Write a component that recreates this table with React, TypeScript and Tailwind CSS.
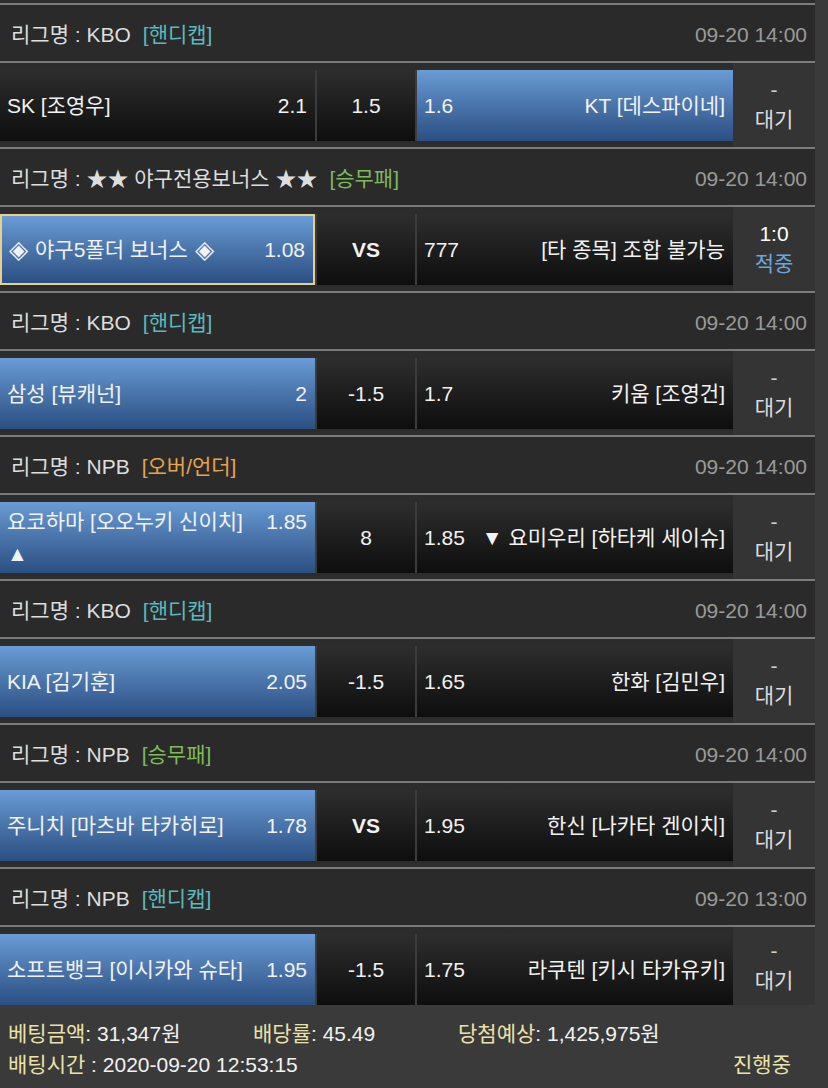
import type { ReactNode } from 'react';

const BLUE = 'bg-linear-to-b from-[#6a9cd5] to-[#2b4f82]';
const DARK = 'bg-linear-to-b from-[#2e2e2e] to-[#0e0e0e]';

type Match = {
  id: number;
  league: string;
  kind: string;
  kindColor: string;
  date: string;
  home: ReactNode;
  homeSub?: string;
  homeOdds: string;
  mid: string;
  midBold?: boolean;
  awayOdds: string;
  away: string;
  pick: 'home' | 'away';
  bonus?: boolean;
  score: string;
  result: string;
  resultColor: string;
};

const Diamond = () => <span className="text-[25px] leading-none">◈</span>;

const MATCHES: Match[] = [
  { id: 1, league: 'KBO', kind: '[핸디캡]', kindColor: 'text-[#5cb8bd]', date: '09-20 14:00', home: 'SK [조영우]', homeOdds: '2.1', mid: '1.5', awayOdds: '1.6', away: 'KT [데스파이네]', pick: 'away', score: '-', result: '대기', resultColor: 'text-[#dcdcdc]' },
  {
    id: 2, league: '★★ 야구전용보너스 ★★', kind: '[승무패]', kindColor: 'text-[#7cba5a]', date: '09-20 14:00',
    home: (
      <>
        <Diamond />
        <span className="mx-[7px]">야구5폴더 보너스</span>
        <Diamond />
      </>
    ),
    homeOdds: '1.08', mid: 'VS', midBold: true, awayOdds: '777', away: '[타 종목] 조합 불가능', pick: 'home', bonus: true, score: '1:0', result: '적중', resultColor: 'text-[#6ea6dc]',
  },
  { id: 3, league: 'KBO', kind: '[핸디캡]', kindColor: 'text-[#5cb8bd]', date: '09-20 14:00', home: '삼성 [뷰캐넌]', homeOdds: '2', mid: '-1.5', awayOdds: '1.7', away: '키움 [조영건]', pick: 'home', score: '-', result: '대기', resultColor: 'text-[#dcdcdc]' },
  { id: 4, league: 'NPB', kind: '[오버/언더]', kindColor: 'text-[#e9a24c]', date: '09-20 14:00', home: '요코하마 [오오누키 신이치]', homeSub: '▲', homeOdds: '1.85', mid: '8', awayOdds: '1.85', away: '▼ 요미우리 [하타케 세이슈]', pick: 'home', score: '-', result: '대기', resultColor: 'text-[#dcdcdc]' },
  { id: 5, league: 'KBO', kind: '[핸디캡]', kindColor: 'text-[#5cb8bd]', date: '09-20 14:00', home: 'KIA [김기훈]', homeOdds: '2.05', mid: '-1.5', awayOdds: '1.65', away: '한화 [김민우]', pick: 'home', score: '-', result: '대기', resultColor: 'text-[#dcdcdc]' },
  { id: 6, league: 'NPB', kind: '[승무패]', kindColor: 'text-[#7cba5a]', date: '09-20 14:00', home: '주니치 [마츠바 타카히로]', homeOdds: '1.78', mid: 'VS', midBold: true, awayOdds: '1.95', away: '한신 [나카타 겐이치]', pick: 'home', score: '-', result: '대기', resultColor: 'text-[#dcdcdc]' },
  { id: 7, league: 'NPB', kind: '[핸디캡]', kindColor: 'text-[#5cb8bd]', date: '09-20 13:00', home: '소프트뱅크 [이시카와 슈타]', homeOdds: '1.95', mid: '-1.5', awayOdds: '1.75', away: '라쿠텐 [키시 타카유키]', pick: 'home', score: '-', result: '대기', resultColor: 'text-[#dcdcdc]' },
];

const Line = () => <div className="h-[2px] bg-[#7b7b7b]" />;

const MatchBlock = ({ m, last }: { m: Match; last: boolean }) => {
  return (
    <div>
      <Line />
      <div className="flex h-[56px] items-center justify-between bg-[#2a2a2a] pl-[11px] pr-[8px] pt-[4px]">
        <div className="text-[#dedede]">
          리그명 : {m.league}
          <span className={`ml-[12px] ${m.kindColor}`}>{m.kind}</span>
        </div>
        <div className="text-[#9a9a9a]">{m.date}</div>
      </div>
      <Line />
      <div className={`flex ${last ? 'h-[78px]' : 'h-[84px]'}`}>
        <div className={`flex flex-1 bg-[#2c2c2c] pt-[7px] ${last ? 'pb-0' : 'pb-[6px]'}`}>
          <div className="flex w-full gap-[2px] bg-[#3c3c3c]">
            <div
              className={`flex w-[315px] items-center justify-between pl-[7px] pr-[8px] ${
                m.pick === 'home' ? BLUE : DARK
              } ${m.bonus ? 'border-2 border-[#e7d08f] pl-[5px] pr-[6px]' : ''}`}
            >
              {m.homeSub ? (
                <>
                  <div className="self-center leading-[32px]">
                    <div>{m.home}</div>
                    <div>{m.homeSub}</div>
                  </div>
                  <div className="self-center pb-[32px] leading-[32px]">{m.homeOdds}</div>
                </>
              ) : (
                <>
                  <div className="flex items-center">{m.home}</div>
                  <div>{m.homeOdds}</div>
                </>
              )}
            </div>
            <div className={`flex w-[98px] items-center justify-center ${DARK} ${m.midBold ? 'font-bold' : ''}`}>
              {m.mid}
            </div>
            <div
              className={`flex flex-1 items-center justify-between pl-[7px] pr-[8px] ${
                m.pick === 'away' ? BLUE : DARK
              }`}
            >
              <div>{m.awayOdds}</div>
              <div>{m.away}</div>
            </div>
          </div>
        </div>
        <div className="flex w-[82px] flex-col items-center justify-center bg-[#343434] leading-[30px]">
          <div className={m.score === '-' ? 'text-[#cfcfcf]' : 'text-white'}>{m.score}</div>
          <div className={m.resultColor}>{m.result}</div>
        </div>
      </div>
    </div>
  );
};

const App = () => {
  return (
    <div
      className="min-h-[1088px] w-full bg-[#3a3a3a] text-[21px] text-[#f2f2f2]"
      style={{ fontFamily: '"Liberation Sans", Arial, "Noto Sans CJK KR", sans-serif' }}
    >
      <div className="w-[815px]">
        <div className="h-[3px] bg-[#2c2c2c]" />
        {MATCHES.map((m, i) => (
          <MatchBlock key={m.id} m={m} last={i === MATCHES.length - 1} />
        ))}
      </div>

      <div className="flex flex-col pl-[8px] pr-[37px] pt-[13px] leading-[31px]">
        <div className="flex">
          <div className="w-[245px]">
            <span className="text-[#ebe2a9]">베팅금액</span>: 31,347원
          </div>
          <div className="w-[205px]">
            <span className="text-[#ebe2a9]">배당률</span>: 45.49
          </div>
          <div>
            <span className="text-[#ebe2a9]">당첨예상</span>: 1,425,975원
          </div>
        </div>
        <div className="flex justify-between">
          <div>
            <span className="text-[#ebe2a9]">배팅시간</span> : 2020-09-20 12:53:15
          </div>
          <div className="text-[#ebe2a9]">진행중</div>
        </div>
      </div>
    </div>
  );
};

export default App;
